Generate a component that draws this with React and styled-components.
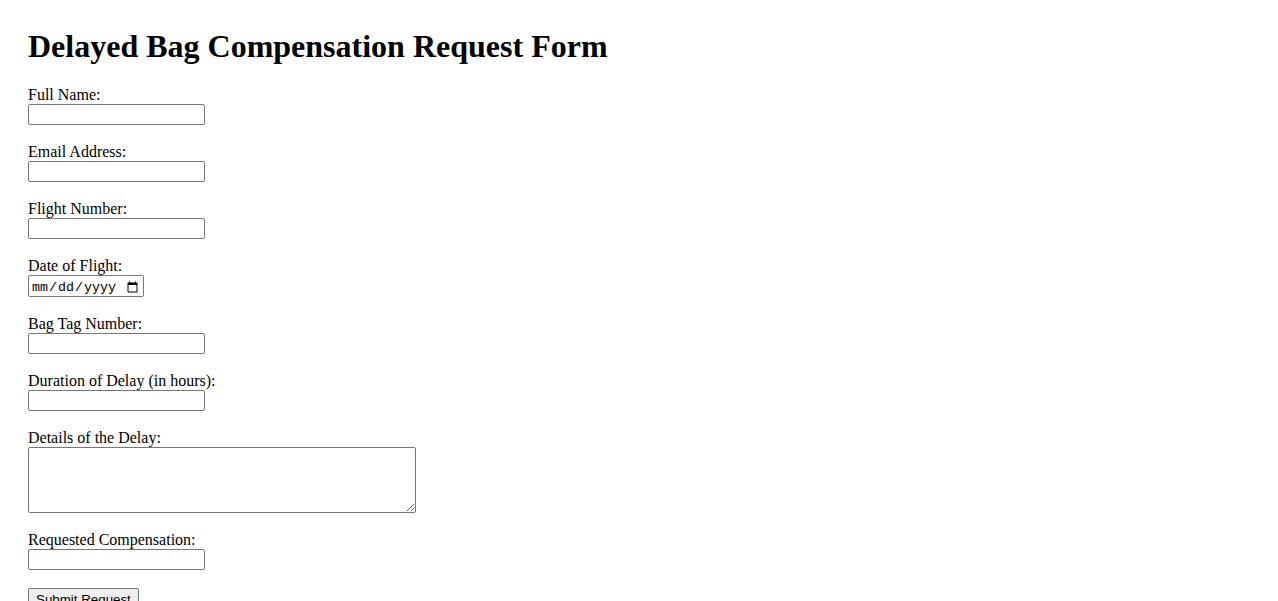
import React from 'react';
import styled, { createGlobalStyle } from 'styled-components';

const GlobalStyle = createGlobalStyle`
    body {
        margin: 8px;
        background: #ffffff;
        color: #000000;
        font-family: "Liberation Serif", "Times New Roman", serif;
        font-size: 16px;
    }
`;

const Pagina = styled.div`
    padding: 0 20px 20px 20px;
`;

const Titulo = styled.h1`
    margin: 20px 0 21px 0;
    font-size: 32px;
    font-weight: bold;
    line-height: 37px;
`;

const Formulario = styled.form`
    display: flex;
    flex-direction: column;
    align-items: flex-start;
`;

const Grupo = styled.div`
    display: flex;
    flex-direction: column;
    align-items: flex-start;
    margin-bottom: 18px;
`;

const Rotulo = styled.label`
    line-height: 18px;
`;

const Campo = styled.input`
    box-sizing: border-box;
    width: 177px;
    height: 21px;
    margin: 0;
    padding: 1px 2px;
    border: 1px solid #767676;
    border-radius: 2px;
    font-family: "Liberation Sans", Arial, sans-serif;
    font-size: 13.33px;
    background: #fff;
`;

const CampoData = styled.input`
    box-sizing: border-box;
    width: 116px;
    height: 22px;
    margin: 0;
    padding: 3px 2px 0 2px;
    border: 1px solid #767676;
    border-radius: 2px;
    font-family: "Liberation Mono", monospace;
    font-size: 13.33px;
    background: #fff;
`;

const AreaTexto = styled.textarea`
    box-sizing: border-box;
    width: 388px;
    height: 66px;
    margin: 0;
    padding: 2px;
    border: 1px solid #767676;
    border-radius: 2px;
    font-family: "Liberation Mono", monospace;
    font-size: 13.33px;
`;

const Botao = styled.button`
    box-sizing: border-box;
    height: 22px;
    padding: 1px 7px;
    margin: 0;
    border: 1px solid #767676;
    border-radius: 2px;
    background: #efefef;
    color: #000;
    font-family: "Liberation Sans", Arial, sans-serif;
    font-size: 13.33px;
`;

const campos = [
    { id: 'nome', rotulo: 'Full Name:', tipo: 'text' },
    { id: 'email', rotulo: 'Email Address:', tipo: 'email' },
    { id: 'voo', rotulo: 'Flight Number:', tipo: 'text' },
    { id: 'data', rotulo: 'Date of Flight:', tipo: 'date' },
    { id: 'etiqueta', rotulo: 'Bag Tag Number:', tipo: 'text' },
    { id: 'atraso', rotulo: 'Duration of Delay (in hours):', tipo: 'text' },
    { id: 'detalhes', rotulo: 'Details of the Delay:', tipo: 'textarea' },
    { id: 'compensacao', rotulo: 'Requested Compensation:', tipo: 'text' }
];

class App extends React.Component {
    renderCampo = campo => {
        if (campo.tipo === 'date') {
            return <CampoData type="date" id={campo.id} />;
        }
        if (campo.tipo === 'textarea') {
            return <AreaTexto id={campo.id} />;
        }
        return <Campo type={campo.tipo} id={campo.id} />;
    };

    render() {
        return (
            <Pagina>
                <GlobalStyle />
                <Titulo>Delayed Bag Compensation Request Form</Titulo>
                <Formulario onSubmit={e => e.preventDefault()}>
                    {campos.map(campo => (
                        <Grupo key={campo.id}>
                            <Rotulo htmlFor={campo.id}>{campo.rotulo}</Rotulo>
                            {this.renderCampo(campo)}
                        </Grupo>
                    ))}
                    <Botao type="submit">Submit Request</Botao>
                </Formulario>
            </Pagina>
        );
    }
}

export default App;
